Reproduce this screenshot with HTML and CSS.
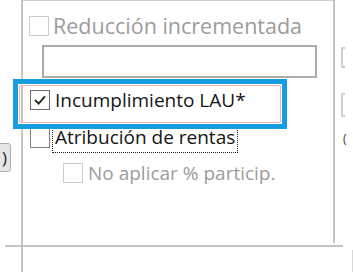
FILE: index.html
```html
<!DOCTYPE html>
<html lang="es">
<head>
<meta charset="utf-8">
<title>Opciones</title>
<link rel="stylesheet" href="styles.css">
</head>
<body>
<div class="screen">
  <div class="left-col">
    <div class="clip-btn"><span class="clip-glyph">)</span></div>
  </div>
  <div class="vline-left"></div>
  <section class="panel">
    <label class="row row-1 disabled">
      <span class="box"></span>
      <span class="label">Reducción incrementada</span>
    </label>
    <div class="textbox"></div>
    <label class="row row-2">
      <span class="box checked">
        <svg viewBox="0 0 20 20" width="18" height="18"><polyline points="4.5,10 8.5,14 15.5,6" fill="none" stroke="#1f331f" stroke-width="2.2"/></svg>
      </span>
      <span class="label">Incumplimiento LAU*</span>
    </label>
    <label class="row row-3">
      <span class="box enabled"></span>
      <span class="label focus">Atribución de rentas</span>
    </label>
    <label class="row row-4 disabled">
      <span class="box"></span>
      <span class="label">No aplicar % particip.</span>
    </label>
  </section>
  <div class="vline-right"></div>
  <div class="right-col">
    <span class="edge edge-1"></span>
    <span class="edge edge-2"></span>
    <span class="edge-glyph">(</span>
  </div>
  <div class="hline"></div>
  <div class="right-tail"></div>
  <div class="highlight"></div>
</div>
</body>
</html>
```

FILE: styles.css
```css
* { box-sizing: border-box; }
html, body { margin: 0; padding: 0; background: #fff; }
body { width: 353px; height: 272px; overflow: hidden; font-family: "Open Sans", "Noto Sans", sans-serif; }

.screen {
  position: relative;
  width: 353px;
  height: 272px;
  display: grid;
  grid-template-columns: 21px 2px 310px 2px 18px;
  grid-template-rows: 245px 2px 25px;
}

.left-col { grid-column: 1; grid-row: 1 / 4; overflow: hidden; }
.clip-btn {
  margin-top: 143px;
  margin-left: -20px;
  width: 31px;
  height: 29px;
  border: 1px solid #adadad;
  border-radius: 3px;
  background: #e6e6e6;
  display: flex;
  align-items: center;
  justify-content: flex-end;
  padding-right: 3px;
  font-size: 17px;
  color: #222;
}
.clip-glyph { line-height: 1; }

.vline-left { grid-column: 2; grid-row: 1 / 4; background: #c4c4c4; }
.vline-right { grid-column: 4; grid-row: 1; height: 243px; background: #c4c4c4; }

.hline { grid-column: 1 / 6; grid-row: 2; margin-left: 5px; margin-right: 10px; background: #c4c4c4; }
.right-tail { grid-column: 5; grid-row: 3; margin-top: 3px; border-right: 1px solid #d8d8d8; }

.panel {
  grid-column: 3;
  grid-row: 1;
  border-top: 1px solid #cfcfcf;
  padding-top: 15px;
  display: flex;
  flex-direction: column;
  font-size: 19px;
  color: #151515;
}

.row { display: flex; align-items: center; height: 20px; }
.box {
  width: 20px; height: 20px;
  border: 1px solid #7a7a7a;
  background: #fff;
  display: flex; align-items: center; justify-content: center;
  flex: none;
}
.label { white-space: nowrap; line-height: 20px; }

.row-1 { margin-left: 6px; }
.row-1 .label { margin-left: 4px; font-size: 21.5px; }
.disabled { color: #9c9c9c; }
.disabled .box { border-color: #cccccc; }

.textbox {
  margin-top: 9px;
  margin-left: 19px;
  width: 275px;
  height: 33px;
  border: 2px solid #ababab;
}

.row-2 { margin-top: 12px; margin-left: 7px; }
.row-2 .label { margin-left: 5px; }
.box.checked { border-color: #6e6e6e; }

.row-3 { margin-top: 18px; margin-left: 7px; }
.row-3 .label { margin-left: 3px; }
.label.focus { outline: 1px dotted #222; outline-offset: 0; padding: 0 2px; height: 27px; line-height: 25px; }
.box.enabled { border-color: #808080; }

.row-4 { margin-top: 15px; margin-left: 40px; }
.row-4 .label { margin-left: 5px; }

.right-col { grid-column: 5; grid-row: 1; position: relative; display: flex; flex-direction: column; padding-left: 6px; }
.edge { display: block; width: 4px; border: 2px solid #cfcfcf; border-right: none; border-radius: 2px 0 0 2px; }
.edge-1 { margin-top: 47px; height: 21px; }
.edge-2 { margin-top: 25px; height: 24px; }
.edge-glyph { margin-top: 16px; margin-left: 2px; font-size: 12px; line-height: 12px; color: #333; }

.highlight {
  position: absolute;
  left: 13px;
  top: 79px;
  width: 274px;
  height: 50px;
  border: 5px solid #169ce0;
  box-shadow: inset 0 0 0 1px #fff, inset 0 0 0 2px #eab3bd;
  pointer-events: none;
}
```
